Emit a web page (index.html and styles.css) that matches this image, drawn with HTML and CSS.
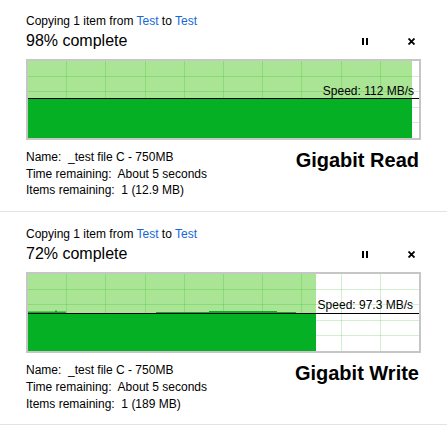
FILE: index.html
```html
<!DOCTYPE html>
<html lang="en">
<head>
    <meta charset="UTF-8">
    <meta name="viewport" content="width=device-width, initial-scale=1.0">
    <title>Copy Speed</title>
    <link rel="stylesheet" href="styles.css">
</head>
<body>

    <div class="panel">
        <div class="caption">Copying 1 item from <span class="link">Test</span> to <span class="link">Test</span></div>
        <div class="status">
            <span class="percent">98% complete</span>
            <div class="controls">
                <span class="ctl">
                    <svg width="7" height="7" viewBox="0 0 7 7"><rect x="0" y="0" width="2" height="7" fill="#000"/><rect x="4" y="0" width="2" height="7" fill="#000"/></svg>
                </span>
                <span class="ctl">
                    <svg width="7" height="7" viewBox="0 0 7 7"><path d="M0.5 0.5 L6.5 6.5 M6.5 0.5 L0.5 6.5" stroke="#000" stroke-width="1.8"/></svg>
                </span>
            </div>
        </div>
        <div class="graph">
            <svg width="391" height="77" viewBox="0 0 391 77">
                <rect x="0" y="0" width="384" height="77" fill="#a9e595"/>
                <g stroke="rgb(0,170,0)" stroke-opacity="0.18" stroke-width="1">
                    <path d="M38.5 0V77 M77.5 0V77 M117.5 0V77 M156.5 0V77 M195.5 0V77 M234.5 0V77 M273.5 0V77 M313.5 0V77 M352.5 0V77"/>
                    <path d="M0 15.5H391 M0 30.5H391 M0 46.5H391 M0 61.5H391"/>
                </g>
                <rect x="0" y="38" width="384" height="39" fill="#06b025"/>
                <path d="M0 37.5H391" stroke="#000" stroke-width="1"/>
                <text x="386" y="33.5" text-anchor="end" class="speed">Speed: 112 MB/s</text>
            </svg>
        </div>
        <div class="details">
            <div class="info">
                <div class="row">Name:  _test file C - 750MB</div>
                <div class="row">Time remaining:  About 5 seconds</div>
                <div class="row">Items remaining:  1 (12.9 MB)</div>
            </div>
            <div class="label">Gigabit Read</div>
        </div>
    </div>

    <div class="panel">
        <div class="caption">Copying 1 item from <span class="link">Test</span> to <span class="link">Test</span></div>
        <div class="status">
            <span class="percent">72% complete</span>
            <div class="controls">
                <span class="ctl">
                    <svg width="7" height="7" viewBox="0 0 7 7"><rect x="0" y="0" width="2" height="7" fill="#000"/><rect x="4" y="0" width="2" height="7" fill="#000"/></svg>
                </span>
                <span class="ctl">
                    <svg width="7" height="7" viewBox="0 0 7 7"><path d="M0.5 0.5 L6.5 6.5 M6.5 0.5 L0.5 6.5" stroke="#000" stroke-width="1.8"/></svg>
                </span>
            </div>
        </div>
        <div class="graph">
            <svg width="391" height="77" viewBox="0 0 391 77">
                <rect x="0" y="0" width="288" height="77" fill="#a9e595"/>
                <g stroke="rgb(0,170,0)" stroke-opacity="0.18" stroke-width="1">
                    <path d="M38.5 0V77 M77.5 0V77 M117.5 0V77 M156.5 0V77 M195.5 0V77 M234.5 0V77 M273.5 0V77 M313.5 0V77 M352.5 0V77"/>
                    <path d="M0 15.5H391 M0 30.5H391 M0 46.5H391 M0 61.5H391"/>
                </g>
                <path d="M0 37.5 L27 37.5 L27 36.5 L29 36.5 L29 37.5 L38 37.5 L38 40 L128 40 L128 38 L181 38 L181 37 L249 37 L249 38 L268 38 L268 40 L288 40 L288 77 L0 77 Z" fill="#06b025"/>
                <path d="M0 39.5H391" stroke="#000" stroke-width="1"/>
                <text x="385" y="34.5" text-anchor="end" class="speed">Speed: 97.3 MB/s</text>
            </svg>
        </div>
        <div class="details">
            <div class="info">
                <div class="row">Name:  _test file C - 750MB</div>
                <div class="row">Time remaining:  About 5 seconds</div>
                <div class="row">Items remaining:  1 (189 MB)</div>
            </div>
            <div class="label">Gigabit Write</div>
        </div>
    </div>

</body>
</html>
```

FILE: styles.css
```css
body {
    margin: 0;
    font-family: "Liberation Sans", Arial, sans-serif;
    color: #000;
    background-color: #fff;
}
.panel {
    padding: 14px 26px 12px 26px;
    border-bottom: 1px solid #e3e3e3;
}
.panel:first-child {
    padding-top: 13px;
}
.caption {
    font-size: 12px;
    line-height: 16px;
}
.link {
    color: #1668d6;
}
.status {
    display: flex;
    align-items: center;
    justify-content: space-between;
    margin-top: 2px;
    height: 20px;
}
.percent {
    font-size: 16px;
    line-height: 20px;
}
.controls {
    display: flex;
    gap: 26px;
}
.ctl {
    width: 20px;
    height: 20px;
    display: flex;
    align-items: center;
    justify-content: center;
}
.ctl svg {
    display: block;
}
.graph {
    margin-top: 8px;
    border: 2px solid #c6c6c6;
    height: 77px;
    background-color: #fff;
}
.graph svg {
    display: block;
}
.speed {
    font-family: "Liberation Sans", Arial, sans-serif;
    font-size: 12px;
    fill: #000;
}
.details {
    display: flex;
    justify-content: space-between;
    align-items: flex-start;
    margin-top: 9px;
}
.info {
    font-size: 12px;
    line-height: 16.7px;
}
.row {
    white-space: pre;
}
.label {
    font-size: 20px;
    font-weight: bold;
    line-height: 23px;
    padding-right: 2px;
}
```
